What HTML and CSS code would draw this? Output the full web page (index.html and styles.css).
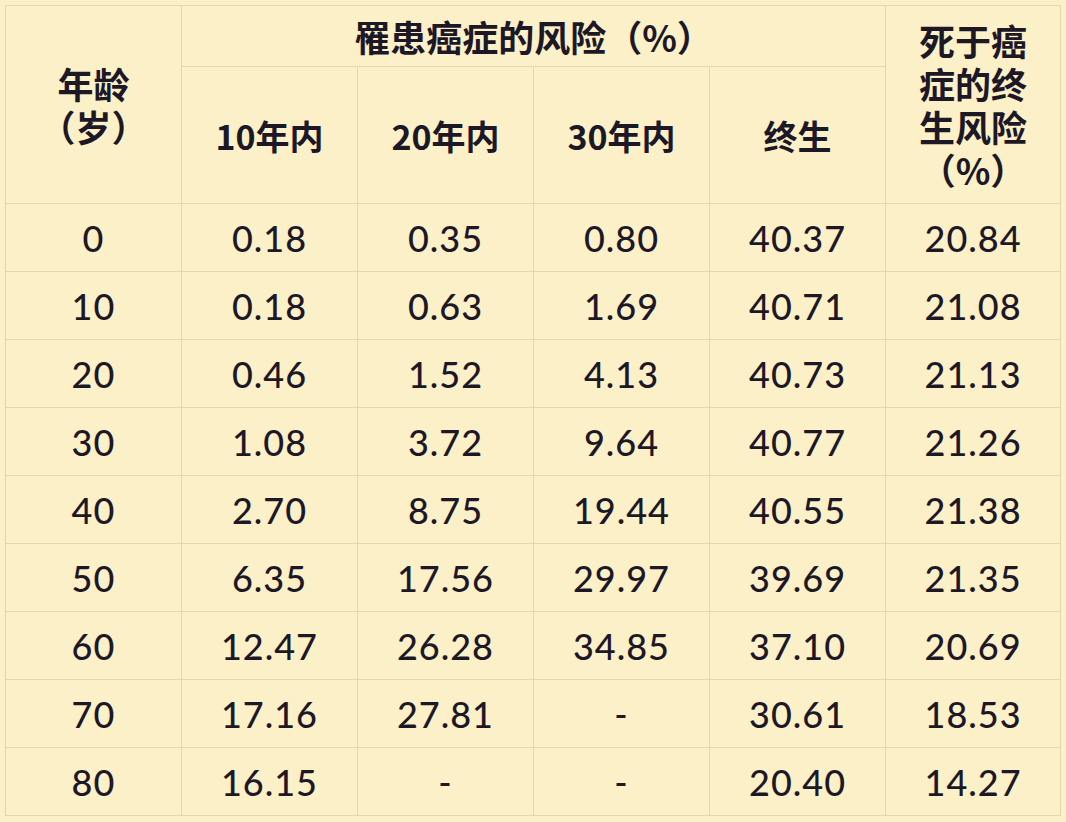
FILE: index.html
```html
<!DOCTYPE html>
<html lang="zh">
<head>
<meta charset="utf-8">
<link rel="stylesheet" href="styles.css">
</head>
<body>
<table class="risk">
  <colgroup>
    <col class="c-age"><col class="c"><col class="c"><col class="c"><col class="c"><col class="c-last">
  </colgroup>
  <thead>
    <tr class="h1">
      <th rowspan="2" class="hd">年龄<br>（岁）</th>
      <th colspan="4" class="hd">罹患癌症的风险（%）</th>
      <th rowspan="2" class="hd">死于癌<br>症的终<br>生风险<br>（%）</th>
    </tr>
    <tr class="h2">
      <th class="hd sub">10年内</th>
      <th class="hd sub">20年内</th>
      <th class="hd sub">30年内</th>
      <th class="hd sub">终生</th>
    </tr>
  </thead>
  <tbody>
    <tr><td>0</td><td>0.18</td><td>0.35</td><td>0.80</td><td>40.37</td><td>20.84</td></tr>
    <tr><td>10</td><td>0.18</td><td>0.63</td><td>1.69</td><td>40.71</td><td>21.08</td></tr>
    <tr><td>20</td><td>0.46</td><td>1.52</td><td>4.13</td><td>40.73</td><td>21.13</td></tr>
    <tr><td>30</td><td>1.08</td><td>3.72</td><td>9.64</td><td>40.77</td><td>21.26</td></tr>
    <tr><td>40</td><td>2.70</td><td>8.75</td><td>19.44</td><td>40.55</td><td>21.38</td></tr>
    <tr><td>50</td><td>6.35</td><td>17.56</td><td>29.97</td><td>39.69</td><td>21.35</td></tr>
    <tr><td>60</td><td>12.47</td><td>26.28</td><td>34.85</td><td>37.10</td><td>20.69</td></tr>
    <tr><td>70</td><td>17.16</td><td>27.81</td><td>-</td><td>30.61</td><td>18.53</td></tr>
    <tr><td>80</td><td>16.15</td><td>-</td><td>-</td><td>20.40</td><td>14.27</td></tr>
  </tbody>
</table>
</body>
</html>
```
FILE: styles.css
```css
html, body {
  margin: 0;
  padding: 0;
  background: #fcf0c8;
}
body {
  padding: 5px 0 0 5px;
  width: 1066px;
  height: 822px;
  box-sizing: border-box;
  overflow: hidden;
}
.risk {
  border-collapse: collapse;
  table-layout: fixed;
  width: 1055px;
  color: #1d1826;
  background: #fcf0c8;
}
.c-age { width: 176px; }
.c { width: 176px; }
.c-last { width: 175px; }
.risk th, .risk td {
  border: 1px solid #e6d8a6;
  text-align: center;
  vertical-align: middle;
  padding: 0;
}
.hd {
  font-family: "Noto Sans CJK SC", "Lato", sans-serif;
  font-weight: 700;
  font-size: 36px;
  line-height: 43px;
}
.sub {
  font-size: 34px;
}
.h1 { height: 61px; }
.h2 { height: 137px; }
.risk td {
  height: 67px;
  font-family: "Lato", "Open Sans", sans-serif;
  font-size: 36px;
  font-weight: 500;
  letter-spacing: 1px;
}
```
